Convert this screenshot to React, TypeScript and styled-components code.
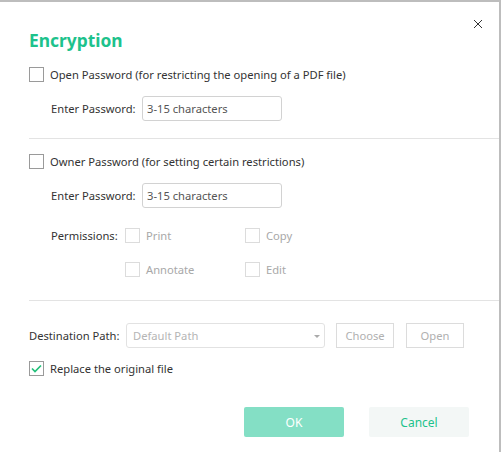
import styled, { createGlobalStyle } from 'styled-components';

const Global = createGlobalStyle`
html, body {
    margin: 0;
    padding: 0;
    background: #bdbdbd;
}
body {
    font-family: "Noto Sans", "Open Sans", sans-serif;
    font-size: 11.2px;
    color: #333;
}
`;

const Dialog = styled.div`
position: relative;
box-sizing: border-box;
margin-top: 2px;
width: 499px;
height: 450px;
background: #fff;
padding: 26px 0 0 29px;
`;

const Close = styled.button`
position: absolute;
top: 14px;
right: 13px;
width: 16px;
height: 16px;
padding: 0;
border: none;
background: transparent;
display: flex;
align-items: center;
justify-content: center;
`;

const Title = styled.h1`
margin: 0;
height: 24px;
line-height: 24px;
font-size: 17.4px;
font-weight: 700;
color: #1dc28c;
`;

const CheckRow = styled.label<{ $top: number }>`
display: flex;
align-items: center;
height: 15px;
margin-top: ${p => p.$top}px;
gap: 6px;
`;

const Box = styled.span<{ $disabled?: boolean }>`
box-sizing: border-box;
width: 15px;
height: 15px;
border: 1px solid ${p => (p.$disabled ? '#dcdcdc' : '#9a9a9a')};
background: #fff;
display: flex;
align-items: center;
justify-content: center;
flex-shrink: 0;
`;

const CheckText = styled.span<{ $disabled?: boolean }>`
color: ${p => (p.$disabled ? '#a8a8a8' : '#333')};
white-space: nowrap;
`;

const Field = styled.div<{ $top: number }>`
display: flex;
align-items: center;
margin-top: ${p => p.$top}px;
padding-left: 22px;
height: 24px;
`;

const Label = styled.span<{ $w: number }>`
width: ${p => p.$w}px;
flex-shrink: 0;
white-space: nowrap;
color: #333;
`;

const Input = styled.input`
box-sizing: border-box;
width: 140px;
height: 25px;
border: 1px solid #d2d2d2;
border-radius: 3px;
padding: 0 4px;
font: inherit;
color: #444;
outline: none;
&::placeholder {
    color: #555;
}
`;

const Divider = styled.hr<{ $top: number }>`
margin: ${p => p.$top}px 0 0 0;
border: none;
border-top: 1px solid #e3e3e3;
height: 0;
`;

const PermBlock = styled.div`
display: flex;
margin-top: 21px;
padding-left: 22px;
`;

const PermGrid = styled.div`
display: grid;
grid-template-columns: 120px 120px;
row-gap: 19px;
`;

const PermItem = styled.label`
display: flex;
align-items: center;
gap: 6px;
height: 15px;
`;

const DestRow = styled.div`
display: flex;
align-items: center;
margin-top: 22px;
height: 25px;
`;

const Select = styled.div`
position: relative;
box-sizing: border-box;
width: 199px;
height: 25px;
border: 1px solid #e2e2e2;
border-radius: 3px;
padding: 0 6px;
display: flex;
align-items: center;
color: #b5b5b5;
&::after {
    content: '';
    position: absolute;
    right: 4px;
    top: 11px;
    border-left: 3px solid transparent;
    border-right: 3px solid transparent;
    border-top: 3px solid #aaa;
}
`;

const SmallButton = styled.button<{ $left: number }>`
box-sizing: border-box;
margin-left: ${p => p.$left}px;
width: 58px;
height: 25px;
border: 1px solid #dcdcdc;
background: #fff;
color: #b0b0b0;
font: inherit;
padding: 0;
`;

const Footer = styled.div`
display: flex;
justify-content: flex-end;
gap: 25px;
margin-top: 31px;
padding-right: 30px;
`;

const Button = styled.button<{ $primary?: boolean }>`
width: 100px;
height: 30px;
border: none;
border-radius: 2px;
font: inherit;
font-size: 12px;
background: ${p => (p.$primary ? '#84dfc5' : '#f3f7f6')};
color: ${p => (p.$primary ? '#fff' : '#1dc28c')};
`;

function Check({ checked, disabled, children }: { checked?: boolean; disabled?: boolean; children: string }) {
    return (
        <>
            <Box $disabled={disabled}>
                {checked && (
                    <svg width="11" height="9" viewBox="0 0 11 9">
                        <path d="M1 4.5 L4 7.5 L10 1.5" fill="none" stroke="#22c07a" strokeWidth="1.7" />
                    </svg>
                )}
            </Box>
            <CheckText $disabled={disabled}>{children}</CheckText>
        </>
    );
}

function App() {
    return (
        <>
            <Global />
            <Dialog>
                <Close>
                    <svg width="10" height="10" viewBox="0 0 10 10">
                        <path d="M1 1 L9 9 M9 1 L1 9" stroke="#333" strokeWidth="1" />
                    </svg>
                </Close>
                <Title>Encryption</Title>

                <CheckRow $top={15}>
                    <Check>Open Password (for restricting the opening of a PDF file)</Check>
                </CheckRow>
                <Field $top={14}>
                    <Label $w={91}>Enter Password:</Label>
                    <Input placeholder="3-15 characters" />
                </Field>

                <Divider $top={18} />

                <CheckRow $top={15}>
                    <Check>Owner Password (for setting certain restrictions)</Check>
                </CheckRow>
                <Field $top={14}>
                    <Label $w={91}>Enter Password:</Label>
                    <Input placeholder="3-15 characters" />
                </Field>

                <PermBlock>
                    <Label $w={74}>Permissions:</Label>
                    <PermGrid>
                        <PermItem><Check disabled>Print</Check></PermItem>
                        <PermItem><Check disabled>Copy</Check></PermItem>
                        <PermItem><Check disabled>Annotate</Check></PermItem>
                        <PermItem><Check disabled>Edit</Check></PermItem>
                    </PermGrid>
                </PermBlock>

                <Divider $top={23} />

                <DestRow>
                    <Label $w={97}>Destination Path:</Label>
                    <Select>Default Path</Select>
                    <SmallButton $left={11}>Choose</SmallButton>
                    <SmallButton $left={12}>Open</SmallButton>
                </DestRow>

                <CheckRow $top={13}>
                    <Check checked>Replace the original file</Check>
                </CheckRow>

                <Footer>
                    <Button $primary>OK</Button>
                    <Button>Cancel</Button>
                </Footer>
            </Dialog>
        </>
    );
}

export default App;
